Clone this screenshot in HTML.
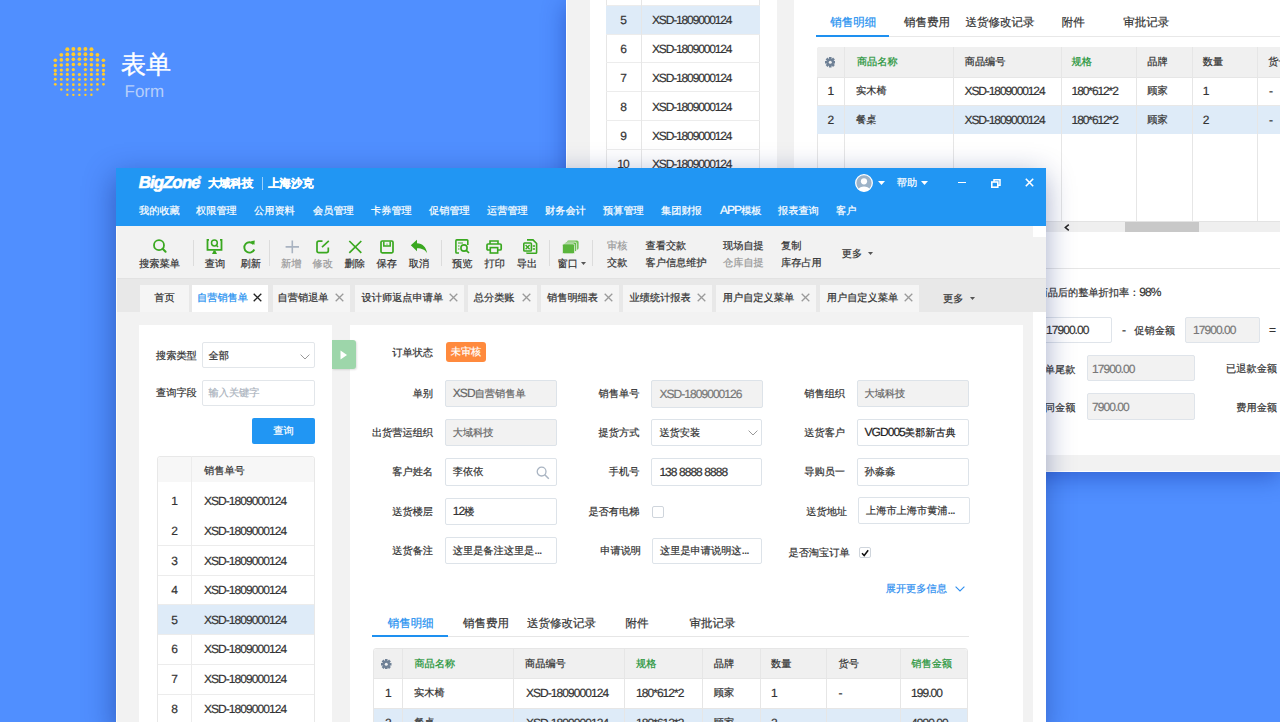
<!DOCTYPE html><html><head><meta charset="utf-8"><style>
*{margin:0;padding:0;box-sizing:border-box}
html,body{width:1280px;height:722px;overflow:hidden}
body{text-rendering:geometricPrecision;background:#508fff;font-family:"Liberation Sans", sans-serif;position:relative}
.a{position:absolute}
.t{position:absolute;white-space:nowrap;-webkit-text-stroke-width:0.2px}
</style></head><body>
<svg class="a" style="left:50px;top:44px" width="60" height="56" viewBox="0 0 60 56"><circle cx="5.30" cy="16.30" r="1.82" fill="#ffcb2d"/><circle cx="5.30" cy="21.40" r="1.73" fill="#ffcb2d"/><circle cx="5.30" cy="26.50" r="1.64" fill="#ffcb2d"/><circle cx="5.30" cy="30.17" r="1.55" fill="#ffcb2d"/><circle cx="5.30" cy="35.27" r="1.46" fill="#ffcb2d"/><circle cx="5.30" cy="40.37" r="1.37" fill="#ffcb2d"/><circle cx="11.32" cy="10.80" r="1.91" fill="#ffcb2d"/><circle cx="11.32" cy="15.90" r="1.82" fill="#ffcb2d"/><circle cx="11.32" cy="21.00" r="1.73" fill="#ffcb2d"/><circle cx="11.32" cy="26.10" r="1.64" fill="#ffcb2d"/><circle cx="11.32" cy="30.29" r="1.55" fill="#ffcb2d"/><circle cx="11.32" cy="35.39" r="1.46" fill="#ffcb2d"/><circle cx="11.32" cy="40.49" r="1.37" fill="#ffcb2d"/><circle cx="11.32" cy="45.59" r="1.28" fill="#ffcb2d"/><circle cx="17.34" cy="5.36" r="2.00" fill="#ffcb2d"/><circle cx="17.34" cy="10.46" r="1.91" fill="#ffcb2d"/><circle cx="17.34" cy="15.56" r="1.82" fill="#ffcb2d"/><circle cx="17.34" cy="20.66" r="1.73" fill="#ffcb2d"/><circle cx="17.34" cy="25.76" r="1.64" fill="#ffcb2d"/><circle cx="17.34" cy="30.39" r="1.55" fill="#ffcb2d"/><circle cx="17.34" cy="35.49" r="1.46" fill="#ffcb2d"/><circle cx="17.34" cy="40.59" r="1.37" fill="#ffcb2d"/><circle cx="17.34" cy="45.69" r="1.28" fill="#ffcb2d"/><circle cx="17.34" cy="50.79" r="1.19" fill="#ffcb2d"/><circle cx="23.36" cy="5.12" r="2.00" fill="#ffcb2d"/><circle cx="23.36" cy="10.22" r="1.91" fill="#ffcb2d"/><circle cx="23.36" cy="15.32" r="1.82" fill="#ffcb2d"/><circle cx="23.36" cy="20.42" r="1.73" fill="#ffcb2d"/><circle cx="23.36" cy="25.52" r="1.64" fill="#ffcb2d"/><circle cx="23.36" cy="30.46" r="1.55" fill="#ffcb2d"/><circle cx="23.36" cy="35.56" r="1.46" fill="#ffcb2d"/><circle cx="23.36" cy="40.66" r="1.37" fill="#ffcb2d"/><circle cx="23.36" cy="45.76" r="1.28" fill="#ffcb2d"/><circle cx="23.36" cy="50.86" r="1.19" fill="#ffcb2d"/><circle cx="29.38" cy="5.00" r="2.00" fill="#ffcb2d"/><circle cx="29.38" cy="10.10" r="1.91" fill="#ffcb2d"/><circle cx="29.38" cy="15.20" r="1.82" fill="#ffcb2d"/><circle cx="29.38" cy="20.30" r="1.73" fill="#ffcb2d"/><circle cx="29.38" cy="30.50" r="1.55" fill="#ffcb2d"/><circle cx="29.38" cy="35.60" r="1.46" fill="#ffcb2d"/><circle cx="29.38" cy="40.70" r="1.37" fill="#ffcb2d"/><circle cx="29.38" cy="45.80" r="1.28" fill="#ffcb2d"/><circle cx="29.38" cy="50.90" r="1.19" fill="#ffcb2d"/><circle cx="35.40" cy="5.12" r="2.00" fill="#ffcb2d"/><circle cx="35.40" cy="10.22" r="1.91" fill="#ffcb2d"/><circle cx="35.40" cy="15.32" r="1.82" fill="#ffcb2d"/><circle cx="35.40" cy="20.42" r="1.73" fill="#ffcb2d"/><circle cx="35.40" cy="25.52" r="1.64" fill="#ffcb2d"/><circle cx="35.40" cy="30.46" r="1.55" fill="#ffcb2d"/><circle cx="35.40" cy="35.56" r="1.46" fill="#ffcb2d"/><circle cx="35.40" cy="40.66" r="1.37" fill="#ffcb2d"/><circle cx="35.40" cy="45.76" r="1.28" fill="#ffcb2d"/><circle cx="35.40" cy="50.86" r="1.19" fill="#ffcb2d"/><circle cx="41.42" cy="5.36" r="2.00" fill="#ffcb2d"/><circle cx="41.42" cy="10.46" r="1.91" fill="#ffcb2d"/><circle cx="41.42" cy="15.56" r="1.82" fill="#ffcb2d"/><circle cx="41.42" cy="20.66" r="1.73" fill="#ffcb2d"/><circle cx="41.42" cy="25.76" r="1.64" fill="#ffcb2d"/><circle cx="41.42" cy="30.39" r="1.55" fill="#ffcb2d"/><circle cx="41.42" cy="35.49" r="1.46" fill="#ffcb2d"/><circle cx="41.42" cy="40.59" r="1.37" fill="#ffcb2d"/><circle cx="41.42" cy="45.69" r="1.28" fill="#ffcb2d"/><circle cx="41.42" cy="50.79" r="1.19" fill="#ffcb2d"/><circle cx="47.44" cy="10.80" r="1.91" fill="#ffcb2d"/><circle cx="47.44" cy="15.90" r="1.82" fill="#ffcb2d"/><circle cx="47.44" cy="21.00" r="1.73" fill="#ffcb2d"/><circle cx="47.44" cy="26.10" r="1.64" fill="#ffcb2d"/><circle cx="47.44" cy="30.29" r="1.55" fill="#ffcb2d"/><circle cx="47.44" cy="35.39" r="1.46" fill="#ffcb2d"/><circle cx="47.44" cy="40.49" r="1.37" fill="#ffcb2d"/><circle cx="47.44" cy="45.59" r="1.28" fill="#ffcb2d"/><circle cx="53.46" cy="16.30" r="1.82" fill="#ffcb2d"/><circle cx="53.46" cy="21.40" r="1.73" fill="#ffcb2d"/><circle cx="53.46" cy="26.50" r="1.64" fill="#ffcb2d"/><circle cx="53.46" cy="30.17" r="1.55" fill="#ffcb2d"/><circle cx="53.46" cy="35.27" r="1.46" fill="#ffcb2d"/><circle cx="53.46" cy="40.37" r="1.37" fill="#ffcb2d"/></svg>
<div class="t" style="left:121px;top:49.7px;font-size:25px;line-height:30px;color:#fff;letter-spacing:0px;-webkit-text-stroke-width:0.4px;">表单</div>
<div class="t" style="left:124.5px;top:81.5px;font-size:17px;line-height:20px;color:#b6cefa;letter-spacing:0px;-webkit-text-stroke-width:0;">Form</div>
<div class="a" style="left:566px;top:0px;width:714px;height:472px;background:#f2f2f2;border-left:1px solid #fff;border-bottom:1px solid #fff;box-shadow:0 5px 22px rgba(10,40,150,.45)"></div>
<div class="a" style="left:589.5px;top:0px;width:187.5px;height:471px;background:#fff;"></div>
<div class="a" style="left:794px;top:0px;width:486px;height:454.5px;background:#fff;"></div>
<div class="a" style="left:606px;top:0px;width:154px;height:180px;background:#fff;border-left:1px solid #e6e6e6;border-right:1px solid #e6e6e6"></div>
<div class="a" style="left:606px;top:5.2px;width:154px;height:28.900000000000002px;background:#deebf8;"></div>
<div class="a" style="left:606px;top:4.7px;width:154px;height:1.0px;background:#ececec;"></div>
<div class="a" style="left:606px;top:33.550000000000004px;width:154px;height:1.0px;background:#ececec;"></div>
<div class="a" style="left:606px;top:62.400000000000006px;width:154px;height:1.0px;background:#ececec;"></div>
<div class="a" style="left:606px;top:91.25000000000001px;width:154px;height:1.0px;background:#ececec;"></div>
<div class="a" style="left:606px;top:120.10000000000001px;width:154px;height:1.0px;background:#ececec;"></div>
<div class="a" style="left:606px;top:148.95px;width:154px;height:1.0px;background:#ececec;"></div>
<div class="a" style="left:641px;top:0px;width:1px;height:180px;background:#e6e6e6;"></div>
<div class="t" style="left:608.0px;width:30px;text-align:center;top:10.2px;font-size:12px;line-height:20px;color:#333;letter-spacing:-0.95px;">5</div>
<div class="t" style="left:652px;top:10.2px;font-size:12px;line-height:20px;color:#333;letter-spacing:-1.15px;">XSD-1809000124</div>
<div class="t" style="left:608.0px;width:30px;text-align:center;top:39.050000000000004px;font-size:12px;line-height:20px;color:#333;letter-spacing:-0.95px;">6</div>
<div class="t" style="left:652px;top:39.050000000000004px;font-size:12px;line-height:20px;color:#333;letter-spacing:-1.15px;">XSD-1809000124</div>
<div class="t" style="left:608.0px;width:30px;text-align:center;top:67.9px;font-size:12px;line-height:20px;color:#333;letter-spacing:-0.95px;">7</div>
<div class="t" style="left:652px;top:67.9px;font-size:12px;line-height:20px;color:#333;letter-spacing:-1.15px;">XSD-1809000124</div>
<div class="t" style="left:608.0px;width:30px;text-align:center;top:96.75000000000001px;font-size:12px;line-height:20px;color:#333;letter-spacing:-0.95px;">8</div>
<div class="t" style="left:652px;top:96.75000000000001px;font-size:12px;line-height:20px;color:#333;letter-spacing:-1.15px;">XSD-1809000124</div>
<div class="t" style="left:608.0px;width:30px;text-align:center;top:125.60000000000002px;font-size:12px;line-height:20px;color:#333;letter-spacing:-0.95px;">9</div>
<div class="t" style="left:652px;top:125.60000000000002px;font-size:12px;line-height:20px;color:#333;letter-spacing:-1.15px;">XSD-1809000124</div>
<div class="t" style="left:608.0px;width:30px;text-align:center;top:154.45000000000002px;font-size:12px;line-height:20px;color:#333;letter-spacing:-0.95px;">10</div>
<div class="t" style="left:652px;top:154.45000000000002px;font-size:12px;line-height:20px;color:#333;letter-spacing:-1.15px;">XSD-1809000124</div>
<div class="t" style="left:830.3px;top:12.8px;font-size:11.5px;line-height:20px;color:#1e90f0;letter-spacing:0px;">销售明细</div>
<div class="t" style="left:904px;top:12.8px;font-size:11.5px;line-height:20px;color:#333;letter-spacing:0px;">销售费用</div>
<div class="t" style="left:965.5px;top:12.8px;font-size:11.5px;line-height:20px;color:#333;letter-spacing:0px;">送货修改记录</div>
<div class="t" style="left:1061.8px;top:12.8px;font-size:11.5px;line-height:20px;color:#333;letter-spacing:0px;">附件</div>
<div class="t" style="left:1123.3px;top:12.8px;font-size:11.5px;line-height:20px;color:#333;letter-spacing:0px;">审批记录</div>
<div class="a" style="left:815.6px;top:36px;width:464.4px;height:1px;background:#e8e8e8;"></div>
<div class="a" style="left:815.6px;top:34.5px;width:73.39999999999998px;height:2.0px;background:#1e90f0;"></div>
<div class="a" style="left:816.6px;top:47px;width:463.4px;height:185.2px;background:#fff;border-left:1px solid #e6e6e6;border-top:1px solid #e6e6e6;border-radius:3px 0 0 0"></div>
<div class="a" style="left:817px;top:47px;width:463px;height:29.599999999999994px;background:#f0f0f0;border-radius:3px 0 0 0"></div>
<div class="a" style="left:817px;top:76.6px;width:463px;height:1.0px;background:#e6e6e6;"></div>
<div class="a" style="left:817px;top:105.3px;width:463px;height:28.89999999999999px;background:#deebf8;"></div>
<div class="a" style="left:817px;top:104.8px;width:463px;height:1.0px;background:#e8e8e8;"></div>
<div class="a" style="left:844.3px;top:47px;width:1.0px;height:174px;background:#e6e6e6;"></div>
<div class="a" style="left:952.5px;top:47px;width:1.0px;height:174px;background:#e6e6e6;"></div>
<div class="a" style="left:1060.5px;top:47px;width:1.0px;height:174px;background:#e6e6e6;"></div>
<div class="a" style="left:1135.5px;top:47px;width:1.0px;height:174px;background:#e6e6e6;"></div>
<div class="a" style="left:1191.7px;top:47px;width:1.0px;height:174px;background:#e6e6e6;"></div>
<div class="a" style="left:1256.7px;top:47px;width:1.0px;height:174px;background:#e6e6e6;"></div>
<div class="a" style="left:817px;top:221px;width:463px;height:11.199999999999989px;background:#efefef;border-top:1px solid #e3e3e3"></div>
<div class="a" style="left:1125.2px;top:221.5px;width:74.20000000000005px;height:10.699999999999989px;background:#c8c8c8;"></div>
<svg class="a" style="left:1063.5px;top:223.5px" width="6" height="7" viewBox="0 0 6 7"><path d="M4.8 0.6L1.3 3.5L4.8 6.4" fill="none" stroke="#222" stroke-width="1.5"/></svg>
<svg class="a" style="left:824.8px;top:57px" width="10.5" height="10.5" viewBox="0 0 10.5 10.5"><g transform="translate(5.25,5.25)" fill="#6f8196"><rect x="-1.3" y="-5.25" width="2.6" height="3" transform="rotate(0)"/><rect x="-1.3" y="-5.25" width="2.6" height="3" transform="rotate(45)"/><rect x="-1.3" y="-5.25" width="2.6" height="3" transform="rotate(90)"/><rect x="-1.3" y="-5.25" width="2.6" height="3" transform="rotate(135)"/><rect x="-1.3" y="-5.25" width="2.6" height="3" transform="rotate(180)"/><rect x="-1.3" y="-5.25" width="2.6" height="3" transform="rotate(225)"/><rect x="-1.3" y="-5.25" width="2.6" height="3" transform="rotate(270)"/><rect x="-1.3" y="-5.25" width="2.6" height="3" transform="rotate(315)"/><circle r="3.6"/><circle r="1.5" fill="#f0f0f0"/></g></svg>
<div class="t" style="left:856.9px;top:53.2px;font-size:10.2px;line-height:20px;color:#1f9438;letter-spacing:0px;">商品名称</div>
<div class="t" style="left:964.7px;top:53.2px;font-size:10.2px;line-height:20px;color:#333;letter-spacing:0px;">商品编号</div>
<div class="t" style="left:1071.6px;top:53.2px;font-size:10.2px;line-height:20px;color:#1f9438;letter-spacing:0px;">规格</div>
<div class="t" style="left:1147.3px;top:53.2px;font-size:10.2px;line-height:20px;color:#333;letter-spacing:0px;">品牌</div>
<div class="t" style="left:1202.8px;top:53.2px;font-size:10.2px;line-height:20px;color:#333;letter-spacing:0px;">数量</div>
<div class="t" style="left:1268.2px;top:53.2px;font-size:10.2px;line-height:20px;color:#333;letter-spacing:0px;">货号</div>
<div class="t" style="left:820.3px;width:20px;text-align:center;top:80.9px;font-size:12px;line-height:20px;color:#333;letter-spacing:-0.95px;">1</div>
<div class="t" style="left:856px;top:82.2px;font-size:10.2px;line-height:20px;color:#333;letter-spacing:0px;">实木椅</div>
<div class="t" style="left:964.5px;top:80.9px;font-size:12px;line-height:20px;color:#333;letter-spacing:-1.1px;">XSD-1809000124</div>
<div class="t" style="left:1071.6px;top:80.9px;font-size:12px;line-height:20px;color:#333;letter-spacing:-1.1px;">180*612*2</div>
<div class="t" style="left:1147.3px;top:82.2px;font-size:10.2px;line-height:20px;color:#333;letter-spacing:0px;">顾家</div>
<div class="t" style="left:1202.8px;top:80.9px;font-size:12px;line-height:20px;color:#333;letter-spacing:-1.1px;">1</div>
<div class="t" style="left:1269px;top:80.9px;font-size:12px;line-height:20px;color:#333;letter-spacing:-1.1px;">-</div>
<div class="t" style="left:820.3px;width:20px;text-align:center;top:109.5px;font-size:12px;line-height:20px;color:#333;letter-spacing:-0.95px;">2</div>
<div class="t" style="left:856px;top:110.8px;font-size:10.2px;line-height:20px;color:#333;letter-spacing:0px;">餐桌</div>
<div class="t" style="left:964.5px;top:109.5px;font-size:12px;line-height:20px;color:#333;letter-spacing:-1.1px;">XSD-1809000124</div>
<div class="t" style="left:1071.6px;top:109.5px;font-size:12px;line-height:20px;color:#333;letter-spacing:-1.1px;">180*612*2</div>
<div class="t" style="left:1147.3px;top:110.8px;font-size:10.2px;line-height:20px;color:#333;letter-spacing:0px;">顾家</div>
<div class="t" style="left:1202.8px;top:109.5px;font-size:12px;line-height:20px;color:#333;letter-spacing:-1.1px;">2</div>
<div class="t" style="left:1269px;top:109.5px;font-size:12px;line-height:20px;color:#333;letter-spacing:-1.1px;">-</div>
<div class="a" style="left:794px;top:268px;width:486px;height:1px;background:#e6e6e6;"></div>
<div class="t" style="right:119.5px;text-align:right;top:284.2px;font-size:10.2px;line-height:20px;color:#333;letter-spacing:0px;margin-right:0px;">扣除赠商品后的整单折扣率：<span style="font-size:12px;letter-spacing:-0.95px;line-height:0">98%</span></div>
<div class="a" style="left:1000px;top:317.2px;width:112.20000000000005px;height:25.69999999999999px;background:#fff;border:1px solid #dfe4ea;border-radius:2px"></div>
<div class="t" style="left:1046px;top:320.2px;font-size:12px;line-height:20px;color:#333;letter-spacing:-0.95px;">17900.00</div>
<div class="t" style="left:1122px;top:320.2px;font-size:12px;line-height:20px;color:#333;letter-spacing:-0.95px;">-</div>
<div class="t" style="left:1134.3px;top:322.2px;font-size:10.2px;line-height:20px;color:#333;letter-spacing:0px;">促销金额</div>
<div class="a" style="left:1185.3px;top:317.2px;width:74.70000000000005px;height:25.69999999999999px;background:#f2f2f2;border:1px solid #dfe4ea;border-radius:2px"></div>
<div class="t" style="left:1193px;top:320.2px;font-size:12px;line-height:20px;color:#777;letter-spacing:-0.95px;">17900.00</div>
<div class="t" style="left:1269px;top:320.2px;font-size:12px;line-height:20px;color:#333;letter-spacing:-0.95px;">=</div>
<div class="t" style="right:204.5999999999999px;text-align:right;top:360.59999999999997px;font-size:10.2px;line-height:20px;color:#333;letter-spacing:0px;margin-right:0px;">订单尾款</div>
<div class="a" style="left:1086.5px;top:354.9px;width:108.5px;height:26.5px;background:#f2f2f2;border:1px solid #dfe4ea;border-radius:2px"></div>
<div class="t" style="left:1092px;top:358.79999999999995px;font-size:12px;line-height:20px;color:#777;letter-spacing:-0.95px;">17900.00</div>
<div class="t" style="right:3px;text-align:right;top:360.4px;font-size:10.2px;line-height:20px;color:#333;letter-spacing:0px;margin-right:0px;">已退款金额</div>
<div class="t" style="right:204.5999999999999px;text-align:right;top:398.7px;font-size:10.2px;line-height:20px;color:#333;letter-spacing:0px;margin-right:0px;">合同金额</div>
<div class="a" style="left:1086.5px;top:393.4px;width:108.5px;height:26.600000000000023px;background:#f2f2f2;border:1px solid #dfe4ea;border-radius:2px"></div>
<div class="t" style="left:1092px;top:397.2px;font-size:12px;line-height:20px;color:#777;letter-spacing:-0.95px;">7900.00</div>
<div class="t" style="right:3px;text-align:right;top:398.7px;font-size:10.2px;line-height:20px;color:#333;letter-spacing:0px;margin-right:0px;">费用金额</div>
<div class="a" style="left:116px;top:168px;width:930px;height:560px;background:#fffdf6;box-shadow:-2px 8px 28px rgba(10,30,110,.42)"></div>
<div class="a" style="left:116px;top:168px;width:930px;height:58px;background:#2196f3;"></div>
<div class="t" style="left:138.8px;top:173.1px;font-size:17px;line-height:20px;color:#fff;letter-spacing:-1.05px;font-weight:bold;font-style:italic;-webkit-text-stroke-width:0.6px;">BigZone</div>
<div class="t" style="left:198px;top:174.5px;font-size:4.5px;line-height:6px;color:#fff;letter-spacing:0px;">®</div>
<div class="t" style="left:208px;top:174.2px;font-size:11.3px;line-height:20px;color:#fff;letter-spacing:0px;font-weight:bold;-webkit-text-stroke-width:0.35px;">大域科技</div>
<div class="a" style="left:261.5px;top:177px;width:1.0px;height:12.5px;background:rgba(255,255,255,.55);"></div>
<div class="t" style="left:268.3px;top:174.2px;font-size:11.3px;line-height:20px;color:#fff;letter-spacing:0px;font-weight:bold;-webkit-text-stroke-width:0.35px;">上海沙克</div>
<svg class="a" style="left:855px;top:173.5px" width="18" height="18" viewBox="0 0 18 18"><circle cx="9" cy="9" r="8.3" fill="#9db3c8" stroke="#fff" stroke-width="1.3"/><circle cx="9" cy="7.3" r="3.1" fill="#fff"/><path d="M3.5 15.2 C4.5 11.5 13.5 11.5 14.5 15.2 L14 16 C11 17.6 7 17.6 4 16Z" fill="#fff"/></svg>
<svg class="a" style="left:877.5px;top:180.5px" width="7" height="4" viewBox="0 0 7 4"><path d="M0 0H7L3.5 4Z" fill="#fff"/></svg>
<div class="t" style="left:896.7px;top:174.2px;font-size:10.2px;line-height:20px;color:#fff;letter-spacing:0px;">帮助</div>
<svg class="a" style="left:920.5px;top:180.5px" width="7" height="4" viewBox="0 0 7 4"><path d="M0 0H7L3.5 4Z" fill="#fff"/></svg>
<div class="a" style="left:958.2px;top:181.8px;width:8.099999999999909px;height:1.3999999999999773px;background:#fff;"></div>
<svg class="a" style="left:991px;top:178.5px" width="10" height="9" viewBox="0 0 10 9"><path d="M3 2.8V0.8H9V6.2H7" fill="none" stroke="#fff" stroke-width="1.5"/><rect x="0.8" y="3" width="6" height="5.2" fill="none" stroke="#fff" stroke-width="1.6"/></svg>
<svg class="a" style="left:1024.5px;top:178.3px" width="9" height="9" viewBox="0 0 9 9"><path d="M0.8 0.8L8.2 8.2M8.2 0.8L0.8 8.2" stroke="#fff" stroke-width="1.6"/></svg>
<div class="t" style="left:139px;top:201.5px;font-size:10.2px;line-height:20px;color:#fff;letter-spacing:0px;">我的收藏</div>
<div class="t" style="left:196px;top:201.5px;font-size:10.2px;line-height:20px;color:#fff;letter-spacing:0px;">权限管理</div>
<div class="t" style="left:254px;top:201.5px;font-size:10.2px;line-height:20px;color:#fff;letter-spacing:0px;">公用资料</div>
<div class="t" style="left:313px;top:201.5px;font-size:10.2px;line-height:20px;color:#fff;letter-spacing:0px;">会员管理</div>
<div class="t" style="left:371px;top:201.5px;font-size:10.2px;line-height:20px;color:#fff;letter-spacing:0px;">卡券管理</div>
<div class="t" style="left:429px;top:201.5px;font-size:10.2px;line-height:20px;color:#fff;letter-spacing:0px;">促销管理</div>
<div class="t" style="left:487px;top:201.5px;font-size:10.2px;line-height:20px;color:#fff;letter-spacing:0px;">运营管理</div>
<div class="t" style="left:545px;top:201.5px;font-size:10.2px;line-height:20px;color:#fff;letter-spacing:0px;">财务会计</div>
<div class="t" style="left:603px;top:201.5px;font-size:10.2px;line-height:20px;color:#fff;letter-spacing:0px;">预算管理</div>
<div class="t" style="left:661px;top:201.5px;font-size:10.2px;line-height:20px;color:#fff;letter-spacing:0px;">集团财报</div>
<div class="t" style="left:720px;top:201.5px;font-size:10.2px;line-height:20px;color:#fff;letter-spacing:0px;"><span style="font-size:12px;letter-spacing:-0.95px;line-height:0">APP</span>模板</div>
<div class="t" style="left:778px;top:201.5px;font-size:10.2px;line-height:20px;color:#fff;letter-spacing:0px;">报表查询</div>
<div class="t" style="left:836px;top:201.5px;font-size:10.2px;line-height:20px;color:#fff;letter-spacing:0px;">客户</div>
<div class="a" style="left:117px;top:226px;width:929px;height:52px;background:#f2f2f2;"></div>
<div class="a" style="left:1033px;top:226px;width:13px;height:10.599999999999994px;background:#fff;"></div>
<div class="a" style="left:117px;top:277.5px;width:929px;height:1.0px;background:#e2e2e2;"></div>
<div class="t" style="left:129.5px;width:60px;text-align:center;top:254.7px;font-size:10.2px;line-height:20px;color:#333;letter-spacing:0px;">搜索菜单</div>
<div class="t" style="left:185.0px;width:60px;text-align:center;top:254.7px;font-size:10.2px;line-height:20px;color:#333;letter-spacing:0px;">查询</div>
<div class="t" style="left:220.8px;width:60px;text-align:center;top:254.7px;font-size:10.2px;line-height:20px;color:#333;letter-spacing:0px;">刷新</div>
<div class="t" style="left:261.3px;width:60px;text-align:center;top:254.7px;font-size:10.2px;line-height:20px;color:#9a9a9a;letter-spacing:0px;">新增</div>
<div class="t" style="left:292.8px;width:60px;text-align:center;top:254.7px;font-size:10.2px;line-height:20px;color:#9a9a9a;letter-spacing:0px;">修改</div>
<div class="t" style="left:324.8px;width:60px;text-align:center;top:254.7px;font-size:10.2px;line-height:20px;color:#333;letter-spacing:0px;">删除</div>
<div class="t" style="left:356.8px;width:60px;text-align:center;top:254.7px;font-size:10.2px;line-height:20px;color:#333;letter-spacing:0px;">保存</div>
<div class="t" style="left:389.0px;width:60px;text-align:center;top:254.7px;font-size:10.2px;line-height:20px;color:#333;letter-spacing:0px;">取消</div>
<div class="t" style="left:432.3px;width:60px;text-align:center;top:254.7px;font-size:10.2px;line-height:20px;color:#333;letter-spacing:0px;">预览</div>
<div class="t" style="left:464.8px;width:60px;text-align:center;top:254.7px;font-size:10.2px;line-height:20px;color:#333;letter-spacing:0px;">打印</div>
<div class="t" style="left:497.0px;width:60px;text-align:center;top:254.7px;font-size:10.2px;line-height:20px;color:#333;letter-spacing:0px;">导出</div>
<div class="t" style="left:537.8px;width:60px;text-align:center;top:254.7px;font-size:10.2px;line-height:20px;color:#333;letter-spacing:0px;">窗口</div>
<div class="a" style="left:193px;top:240px;width:1px;height:26px;background:#dcdcdc;"></div>
<div class="a" style="left:269px;top:240px;width:1px;height:26px;background:#dcdcdc;"></div>
<div class="a" style="left:441px;top:240px;width:1px;height:26px;background:#dcdcdc;"></div>
<div class="a" style="left:548.5px;top:240px;width:1.0px;height:26px;background:#dcdcdc;"></div>
<div class="a" style="left:592px;top:240px;width:1px;height:26px;background:#dcdcdc;"></div>
<svg class="a" style="left:580.5px;top:261.5px" width="5" height="3" viewBox="0 0 5 3"><path d="M0 0H5L2.5 3Z" fill="#555"/></svg>
<svg class="a" style="left:152px;top:238px" width="16" height="16" viewBox="0 0 16 16"><circle cx="7" cy="7.2" r="5" fill="none" stroke="#3aa820" stroke-width="1.8"/><path d="M10.6 10.8L13.6 13.8" stroke="#3aa820" stroke-width="2" stroke-linecap="round"/></svg>
<svg class="a" style="left:206px;top:238px" width="18" height="17" viewBox="0 0 18 17"><path d="M3 1.8H1.5V11.8H15.5V1.8H14" fill="none" stroke="#3aa820" stroke-width="1.8"/><circle cx="8.4" cy="5" r="2.9" fill="none" stroke="#3aa820" stroke-width="1.5"/><path d="M10.4 7.2L12 9" stroke="#3aa820" stroke-width="1.5"/><path d="M6 16H11L9.3 12.6H7.7Z" fill="#3aa820"/></svg>
<svg class="a" style="left:242px;top:238.5px" width="15" height="16" viewBox="0 0 15 16"><path d="M11.6 5.2A5.2 5.2 0 1 0 12.3 10.5" fill="none" stroke="#3aa820" stroke-width="1.9"/><path d="M8.8 2.2L12.8 1.5L12.3 6Z" fill="#3aa820"/></svg>
<svg class="a" style="left:284.5px;top:239.5px" width="15" height="14" viewBox="0 0 15 14"><path d="M7.3 0.6V13.2M0.6 6.9H14" stroke="#a9b3c1" stroke-width="1.6"/></svg>
<svg class="a" style="left:315.5px;top:239.5px" width="15" height="14" viewBox="0 0 15 14"><path d="M6.5 1.2H2.8Q1 1.2 1 3V11Q1 12.6 2.8 12.6H10.5Q12.3 12.6 12.3 11V7.5" fill="none" stroke="#3aa820" stroke-width="1.7"/><path d="M6 7.2L12.8 0.8" stroke="#3aa820" stroke-width="1.6"/></svg>
<svg class="a" style="left:347.5px;top:239.5px" width="15" height="14" viewBox="0 0 15 14"><path d="M1.3 1L13.3 12.8M13.3 1L1.3 12.8" stroke="#3aa820" stroke-width="1.7"/></svg>
<svg class="a" style="left:379.5px;top:239.5px" width="15" height="14" viewBox="0 0 15 14"><rect x="1" y="1" width="12" height="11.8" rx="1.2" fill="none" stroke="#3aa820" stroke-width="1.7"/><path d="M3.8 1.5V6H10.2V1.5" fill="none" stroke="#3aa820" stroke-width="1.5"/><path d="M6.2 4.6L7 3.2L7.8 4.6Z" fill="#3aa820"/></svg>
<svg class="a" style="left:409.5px;top:239px" width="18" height="15" viewBox="0 0 18 15"><path d="M0.8 6.2L7 0.8V4.2C12.5 4.2 16 8 17.2 14.2C15 10.6 12 9.2 7 9.2V12.2Z" fill="#3aa820"/></svg>
<svg class="a" style="left:455px;top:238.5px" width="16" height="16" viewBox="0 0 16 16"><path d="M12.8 6V1.6Q12.8 0.9 12 0.9H1.7Q0.9 0.9 0.9 1.7V13.3Q0.9 14 1.7 14H4" fill="none" stroke="#3aa820" stroke-width="1.6"/><circle cx="9" cy="9" r="3.1" fill="none" stroke="#3aa820" stroke-width="1.6"/><path d="M11.3 11.3L14 14" stroke="#3aa820" stroke-width="1.7"/><path d="M3 4H8M3 7H4.5M3 10H4.5" stroke="#3aa820" stroke-width="1.2"/></svg>
<svg class="a" style="left:486px;top:239.5px" width="17" height="14" viewBox="0 0 17 14"><path d="M4 4V1H12V4" fill="none" stroke="#3aa820" stroke-width="1.6"/><path d="M4 10H2Q1 10 1 9V5Q1 4 2 4H14Q15.2 4 15.2 5V9Q15.2 10 14 10H12" fill="none" stroke="#3aa820" stroke-width="1.7"/><rect x="4.3" y="7.6" width="7.4" height="5.4" fill="none" stroke="#3aa820" stroke-width="1.6"/></svg>
<svg class="a" style="left:522.5px;top:238.5px" width="15" height="16" viewBox="0 0 15 16"><path d="M4 0.9H10L13.6 4.5V13.4Q13.6 14.2 12.8 14.2H4.6Q3.8 14.2 3.8 13.4" fill="none" stroke="#3aa820" stroke-width="1.6"/><rect x="0.8" y="4" width="7.6" height="8" rx="0.8" fill="none" stroke="#3aa820" stroke-width="1.6"/><path d="M2.6 6L6.6 10.2M6.6 6L2.6 10.2" stroke="#3aa820" stroke-width="1.3"/><path d="M9.8 7H12M9.8 10H12" stroke="#3aa820" stroke-width="1.3"/></svg>
<svg class="a" style="left:561.5px;top:239.5px" width="17" height="14" viewBox="0 0 17 14"><rect x="4.8" y="0.5" width="11.8" height="9.2" rx="1.6" fill="#6fc152"/><rect x="2.6" y="2.1" width="12" height="9.6" rx="1.6" fill="#63bb47" stroke="#f2f2f2" stroke-width="0.8"/><rect x="0.4" y="3.8" width="12.2" height="10" rx="1.6" fill="#5ab53c" stroke="#f2f2f2" stroke-width="0.8"/></svg>
<div class="t" style="left:607px;top:237.2px;font-size:10.2px;line-height:20px;color:#9a9a9a;letter-spacing:0px;">审核</div>
<div class="t" style="left:607px;top:254.2px;font-size:10.2px;line-height:20px;color:#333;letter-spacing:0px;">交款</div>
<div class="t" style="left:645.5px;top:237.2px;font-size:10.2px;line-height:20px;color:#333;letter-spacing:0px;">查看交款</div>
<div class="t" style="left:645.5px;top:254.2px;font-size:10.2px;line-height:20px;color:#333;letter-spacing:0px;">客户信息维护</div>
<div class="t" style="left:723px;top:237.2px;font-size:10.2px;line-height:20px;color:#333;letter-spacing:0px;">现场自提</div>
<div class="t" style="left:723px;top:254.2px;font-size:10.2px;line-height:20px;color:#9a9a9a;letter-spacing:0px;">仓库自提</div>
<div class="t" style="left:781px;top:237.2px;font-size:10.2px;line-height:20px;color:#333;letter-spacing:0px;">复制</div>
<div class="t" style="left:781px;top:254.2px;font-size:10.2px;line-height:20px;color:#333;letter-spacing:0px;">库存占用</div>
<div class="t" style="left:841.8px;top:244.7px;font-size:10.2px;line-height:20px;color:#333;letter-spacing:0px;">更多</div>
<svg class="a" style="left:867.5px;top:252px" width="5" height="3" viewBox="0 0 5 3"><path d="M0 0H5L2.5 3Z" fill="#555"/></svg>
<div class="a" style="left:117px;top:278.5px;width:929px;height:33.5px;background:#e8e8e8;"></div>
<div class="a" style="left:140px;top:285px;width:48.80000000000001px;height:27px;background:#f5f5f5;"></div>
<div class="t" style="left:140.0px;width:48.80000000000001px;text-align:center;top:289.0px;font-size:10.2px;line-height:20px;color:#333;letter-spacing:0px;">首页</div>
<div class="a" style="left:192px;top:285px;width:76px;height:27px;background:#fff;"></div>
<div class="t" style="left:197px;top:289.0px;font-size:10.2px;line-height:20px;color:#1e90f0;letter-spacing:0px;">自营销售单</div>
<svg class="a" style="left:253.2px;top:293.3px" width="9" height="9" viewBox="0 0 9 9"><path d="M0.7 0.7L8.3 8.3M8.3 0.7L0.7 8.3" stroke="#222" stroke-width="1.3"/></svg>
<div class="a" style="left:272.6px;top:285px;width:77.39999999999998px;height:27px;background:#f5f5f5;"></div>
<div class="t" style="left:277.6px;top:289.0px;font-size:10.2px;line-height:20px;color:#333;letter-spacing:0px;">自营销退单</div>
<svg class="a" style="left:335.2px;top:293.3px" width="9" height="9" viewBox="0 0 9 9"><path d="M0.7 0.7L8.3 8.3M8.3 0.7L0.7 8.3" stroke="#9a9a9a" stroke-width="1.3"/></svg>
<div class="a" style="left:354.7px;top:285px;width:109.10000000000002px;height:27px;background:#f5f5f5;"></div>
<div class="t" style="left:361.6px;top:289.0px;font-size:10.2px;line-height:20px;color:#333;letter-spacing:0px;">设计师返点申请单</div>
<svg class="a" style="left:449.0px;top:293.3px" width="9" height="9" viewBox="0 0 9 9"><path d="M0.7 0.7L8.3 8.3M8.3 0.7L0.7 8.3" stroke="#9a9a9a" stroke-width="1.3"/></svg>
<div class="a" style="left:467.8px;top:285px;width:68.80000000000001px;height:27px;background:#f5f5f5;"></div>
<div class="t" style="left:473.8px;top:289.0px;font-size:10.2px;line-height:20px;color:#333;letter-spacing:0px;">总分类账</div>
<svg class="a" style="left:521.8000000000001px;top:293.3px" width="9" height="9" viewBox="0 0 9 9"><path d="M0.7 0.7L8.3 8.3M8.3 0.7L0.7 8.3" stroke="#9a9a9a" stroke-width="1.3"/></svg>
<div class="a" style="left:541px;top:285px;width:78px;height:27px;background:#f5f5f5;"></div>
<div class="t" style="left:547px;top:289.0px;font-size:10.2px;line-height:20px;color:#333;letter-spacing:0px;">销售明细表</div>
<svg class="a" style="left:604.2px;top:293.3px" width="9" height="9" viewBox="0 0 9 9"><path d="M0.7 0.7L8.3 8.3M8.3 0.7L0.7 8.3" stroke="#9a9a9a" stroke-width="1.3"/></svg>
<div class="a" style="left:623.4px;top:285px;width:88.60000000000002px;height:27px;background:#f5f5f5;"></div>
<div class="t" style="left:629.6px;top:289.0px;font-size:10.2px;line-height:20px;color:#333;letter-spacing:0px;">业绩统计报表</div>
<svg class="a" style="left:697.2px;top:293.3px" width="9" height="9" viewBox="0 0 9 9"><path d="M0.7 0.7L8.3 8.3M8.3 0.7L0.7 8.3" stroke="#9a9a9a" stroke-width="1.3"/></svg>
<div class="a" style="left:716px;top:285px;width:100px;height:27px;background:#f5f5f5;"></div>
<div class="t" style="left:722.8px;top:289.0px;font-size:10.2px;line-height:20px;color:#333;letter-spacing:0px;">用户自定义菜单</div>
<svg class="a" style="left:801.2px;top:293.3px" width="9" height="9" viewBox="0 0 9 9"><path d="M0.7 0.7L8.3 8.3M8.3 0.7L0.7 8.3" stroke="#9a9a9a" stroke-width="1.3"/></svg>
<div class="a" style="left:820px;top:285px;width:99px;height:27px;background:#f5f5f5;"></div>
<div class="t" style="left:826.8px;top:289.0px;font-size:10.2px;line-height:20px;color:#333;letter-spacing:0px;">用户自定义菜单</div>
<svg class="a" style="left:904.2px;top:293.3px" width="9" height="9" viewBox="0 0 9 9"><path d="M0.7 0.7L8.3 8.3M8.3 0.7L0.7 8.3" stroke="#9a9a9a" stroke-width="1.3"/></svg>
<div class="t" style="left:943px;top:289.8px;font-size:10.2px;line-height:20px;color:#333;letter-spacing:0px;">更多</div>
<svg class="a" style="left:969.5px;top:297px" width="5" height="3" viewBox="0 0 5 3"><path d="M0 0H5L2.5 3Z" fill="#555"/></svg>
<div class="a" style="left:117px;top:312px;width:929px;height:410px;background:#f2f2f2;"></div>
<div class="a" style="left:1033px;top:312px;width:13px;height:410px;background:#fff;"></div>
<div class="a" style="left:139px;top:325px;width:193px;height:397px;background:#fff;"></div>
<div class="t" style="left:156px;top:347.2px;font-size:10.2px;line-height:20px;color:#333;letter-spacing:0px;">搜索类型</div>
<div class="a" style="left:202.3px;top:342.3px;width:112.30000000000001px;height:26.19999999999999px;background:#fff;border:1px solid #e2e6ea;border-radius:2px"></div>
<div class="t" style="left:208.5px;top:347.0px;font-size:10.2px;line-height:20px;color:#333;letter-spacing:0px;">全部</div>
<svg class="a" style="left:300px;top:353.5px" width="10" height="6" viewBox="0 0 10 6"><path d="M0.6 0.6L5 5L9.4 0.6" fill="none" stroke="#999" stroke-width="1"/></svg>
<div class="t" style="left:156px;top:384.4px;font-size:10.2px;line-height:20px;color:#333;letter-spacing:0px;">查询字段</div>
<div class="a" style="left:202.3px;top:380px;width:112.30000000000001px;height:25.69999999999999px;background:#fff;border:1px solid #e2e6ea;border-radius:2px"></div>
<div class="t" style="left:208.5px;top:384.2px;font-size:10.2px;line-height:20px;color:#aab2bd;letter-spacing:0px;">输入关键字</div>
<div class="a" style="left:252px;top:418px;width:62.80000000000001px;height:25.69999999999999px;background:#2196f3;border-radius:2px"></div>
<div class="t" style="left:253.39999999999998px;width:60px;text-align:center;top:422.2px;font-size:10.2px;line-height:20px;color:#fff;letter-spacing:0px;">查询</div>
<div class="a" style="left:156.5px;top:456px;width:158.0px;height:284px;background:#fff;border:1px solid #e8e8e8;border-radius:3px 3px 0 0"></div>
<div class="a" style="left:158px;top:457px;width:155.5px;height:25px;background:#f7f7f7;border-radius:3px 3px 0 0"></div>
<div class="a" style="left:191px;top:456px;width:1px;height:266px;background:#ececec;"></div>
<div class="t" style="left:204px;top:462.4px;font-size:10.2px;line-height:20px;color:#333;letter-spacing:0px;">销售单号</div>
<div class="a" style="left:158px;top:604.7px;width:155.5px;height:30.09999999999991px;background:#deebf8;"></div>
<div class="a" style="left:158px;top:545.1px;width:155.5px;height:1.0px;background:#ececec;"></div>
<div class="a" style="left:158px;top:574.8px;width:155.5px;height:1.0px;background:#ececec;"></div>
<div class="a" style="left:158px;top:604.2px;width:155.5px;height:1.0px;background:#ececec;"></div>
<div class="a" style="left:158px;top:634.3px;width:155.5px;height:1.0px;background:#ececec;"></div>
<div class="a" style="left:158px;top:663.8px;width:155.5px;height:1.0px;background:#ececec;"></div>
<div class="a" style="left:158px;top:693.7px;width:155.5px;height:1.0px;background:#ececec;"></div>
<div class="t" style="left:164.2px;width:20px;text-align:center;top:491.4px;font-size:12px;line-height:20px;color:#333;letter-spacing:-0.95px;">1</div>
<div class="t" style="left:204px;top:491.4px;font-size:12px;line-height:20px;color:#333;letter-spacing:-0.95px;">XSD-1809000124</div>
<div class="t" style="left:164.2px;width:20px;text-align:center;top:521.4px;font-size:12px;line-height:20px;color:#333;letter-spacing:-0.95px;">2</div>
<div class="t" style="left:204px;top:521.4px;font-size:12px;line-height:20px;color:#333;letter-spacing:-0.95px;">XSD-1809000124</div>
<div class="t" style="left:164.2px;width:20px;text-align:center;top:550.9px;font-size:12px;line-height:20px;color:#333;letter-spacing:-0.95px;">3</div>
<div class="t" style="left:204px;top:550.9px;font-size:12px;line-height:20px;color:#333;letter-spacing:-0.95px;">XSD-1809000124</div>
<div class="t" style="left:164.2px;width:20px;text-align:center;top:580.4px;font-size:12px;line-height:20px;color:#333;letter-spacing:-0.95px;">4</div>
<div class="t" style="left:204px;top:580.4px;font-size:12px;line-height:20px;color:#333;letter-spacing:-0.95px;">XSD-1809000124</div>
<div class="t" style="left:164.2px;width:20px;text-align:center;top:609.9px;font-size:12px;line-height:20px;color:#333;letter-spacing:-0.95px;">5</div>
<div class="t" style="left:204px;top:609.9px;font-size:12px;line-height:20px;color:#333;letter-spacing:-0.95px;">XSD-1809000124</div>
<div class="t" style="left:164.2px;width:20px;text-align:center;top:639.4px;font-size:12px;line-height:20px;color:#333;letter-spacing:-0.95px;">6</div>
<div class="t" style="left:204px;top:639.4px;font-size:12px;line-height:20px;color:#333;letter-spacing:-0.95px;">XSD-1809000124</div>
<div class="t" style="left:164.2px;width:20px;text-align:center;top:668.9px;font-size:12px;line-height:20px;color:#333;letter-spacing:-0.95px;">7</div>
<div class="t" style="left:204px;top:668.9px;font-size:12px;line-height:20px;color:#333;letter-spacing:-0.95px;">XSD-1809000124</div>
<div class="t" style="left:164.2px;width:20px;text-align:center;top:698.9px;font-size:12px;line-height:20px;color:#333;letter-spacing:-0.95px;">8</div>
<div class="t" style="left:204px;top:698.9px;font-size:12px;line-height:20px;color:#333;letter-spacing:-0.95px;">XSD-1809000124</div>
<div class="a" style="left:350px;top:325px;width:672.75px;height:397px;background:#fff;"></div>
<div class="a" style="left:332px;top:340px;width:23.5px;height:29px;background:#9dd6aa;border-radius:0 3px 3px 0;box-shadow:1px 1px 2px rgba(0,0,0,.12)"></div>
<svg class="a" style="left:339.5px;top:349.5px" width="8" height="10" viewBox="0 0 8 10"><path d="M0.5 0.5L7 5L0.5 9.5Z" fill="#fff"/></svg>
<div class="t" style="right:847px;text-align:right;top:343.5px;font-size:10.2px;line-height:20px;color:#333;letter-spacing:0px;margin-right:0px;">订单状态</div>
<div class="a" style="left:446px;top:341.7px;width:40px;height:20.100000000000023px;background:#ff8a3d;border-radius:3px"></div>
<div class="t" style="left:446.0px;width:40px;text-align:center;top:343.0px;font-size:10.2px;line-height:20px;color:#fff;letter-spacing:0px;">未审核</div>
<div class="t" style="right:847px;text-align:right;top:384.84999999999997px;font-size:10.2px;line-height:20px;color:#333;letter-spacing:0px;margin-right:0px;">单别</div>
<div class="a" style="left:444.5px;top:380px;width:112.0px;height:27.30000000000001px;background:#f2f2f2;border:1px solid #dde3e9;border-radius:2px"></div>
<div class="t" style="left:452.8px;top:384.84999999999997px;font-size:10.2px;line-height:20px;color:#666;letter-spacing:0px;"><span style="font-size:12px;letter-spacing:-0.95px;line-height:0">XSD</span>自营销售单</div>
<div class="t" style="right:847px;text-align:right;top:424.15px;font-size:10.2px;line-height:20px;color:#333;letter-spacing:0px;margin-right:0px;">出货营运组织</div>
<div class="a" style="left:444.5px;top:419.4px;width:112.0px;height:27.100000000000023px;background:#f2f2f2;border:1px solid #dde3e9;border-radius:2px"></div>
<div class="t" style="left:452.8px;top:424.15px;font-size:10.2px;line-height:20px;color:#666;letter-spacing:0px;">大域科技</div>
<div class="t" style="right:847px;text-align:right;top:463.25px;font-size:10.2px;line-height:20px;color:#333;letter-spacing:0px;margin-right:0px;">客户姓名</div>
<div class="a" style="left:444.5px;top:458.3px;width:112.0px;height:27.5px;background:#fff;border:1px solid #dde3e9;border-radius:2px"></div>
<div class="t" style="left:452.8px;top:463.25px;font-size:10.2px;line-height:20px;color:#333;letter-spacing:0px;">李依依</div>
<div class="t" style="right:847px;text-align:right;top:502.84999999999997px;font-size:10.2px;line-height:20px;color:#333;letter-spacing:0px;margin-right:0px;">送货楼层</div>
<div class="a" style="left:444.5px;top:498px;width:112.0px;height:27.299999999999955px;background:#fff;border:1px solid #dde3e9;border-radius:2px"></div>
<div class="t" style="left:452.8px;top:502.84999999999997px;font-size:10.2px;line-height:20px;color:#333;letter-spacing:0px;"><span style="font-size:12px;letter-spacing:-0.95px;line-height:0">12</span>楼</div>
<div class="t" style="right:847px;text-align:right;top:542.0px;font-size:10.2px;line-height:20px;color:#333;letter-spacing:0px;margin-right:0px;">送货备注</div>
<div class="a" style="left:444.5px;top:537.3px;width:112.0px;height:27.0px;background:#fff;border:1px solid #dde3e9;border-radius:2px"></div>
<div class="t" style="left:452.8px;top:542.0px;font-size:10.2px;line-height:20px;color:#333;letter-spacing:0px;">这里是备注这里是<span style="font-size:12px;letter-spacing:-0.95px;line-height:0">...</span></div>
<svg class="a" style="left:535.5px;top:465.5px" width="14" height="14" viewBox="0 0 14 14"><circle cx="5.6" cy="5.6" r="4.4" fill="none" stroke="#a9b4c2" stroke-width="1.3"/><path d="M8.8 8.8L12.8 12.8" stroke="#a9b4c2" stroke-width="1.5"/></svg>
<div class="t" style="right:640.7px;text-align:right;top:384.84999999999997px;font-size:10.2px;line-height:20px;color:#333;letter-spacing:0px;margin-right:0px;">销售单号</div>
<div class="t" style="right:640.7px;text-align:right;top:424.15px;font-size:10.2px;line-height:20px;color:#333;letter-spacing:0px;margin-right:0px;">提货方式</div>
<div class="t" style="right:640.7px;text-align:right;top:463.25px;font-size:10.2px;line-height:20px;color:#333;letter-spacing:0px;margin-right:0px;">手机号</div>
<div class="t" style="right:640.7px;text-align:right;top:502.84999999999997px;font-size:10.2px;line-height:20px;color:#333;letter-spacing:0px;margin-right:0px;">是否有电梯</div>
<div class="t" style="right:639px;text-align:right;top:542.0px;font-size:10.2px;line-height:20px;color:#333;letter-spacing:0px;margin-right:0px;">申请说明</div>
<div class="a" style="left:651.3px;top:380.3px;width:111.70000000000005px;height:27.69999999999999px;background:#f2f2f2;border:1px solid #dde3e9;border-radius:2px"></div>
<div class="t" style="left:659.4px;top:383.79999999999995px;font-size:12px;line-height:20px;color:#777;letter-spacing:-0.95px;">XSD-1809000126</div>
<div class="a" style="left:651.3px;top:419.4px;width:111.20000000000005px;height:27.100000000000023px;background:#fff;border:1px solid #dde3e9;border-radius:2px"></div>
<div class="t" style="left:659.4px;top:424.2px;font-size:10.2px;line-height:20px;color:#333;letter-spacing:0px;">送货安装</div>
<svg class="a" style="left:748px;top:430px" width="10" height="6" viewBox="0 0 10 6"><path d="M0.6 0.6L5 5L9.4 0.6" fill="none" stroke="#999" stroke-width="1"/></svg>
<div class="a" style="left:651.3px;top:458.3px;width:111.20000000000005px;height:27.5px;background:#fff;border:1px solid #dde3e9;border-radius:2px"></div>
<div class="t" style="left:659.4px;top:461.9px;font-size:12px;line-height:20px;color:#333;letter-spacing:-0.95px;">138 8888 8888</div>
<div class="a" style="left:652px;top:506px;width:11.700000000000045px;height:11.5px;background:#fff;border:1px solid #cfd5dc;border-radius:2px"></div>
<div class="a" style="left:652px;top:538px;width:110px;height:25.600000000000023px;background:#fff;border:1px solid #dde3e9;border-radius:2px"></div>
<div class="t" style="left:660px;top:542.0px;font-size:10.2px;line-height:20px;color:#333;letter-spacing:0px;">这里是申请说明这<span style="font-size:12px;letter-spacing:-0.95px;line-height:0">...</span></div>
<div class="t" style="right:435px;text-align:right;top:384.84999999999997px;font-size:10.2px;line-height:20px;color:#333;letter-spacing:0px;margin-right:0px;">销售组织</div>
<div class="t" style="right:435px;text-align:right;top:424.15px;font-size:10.2px;line-height:20px;color:#333;letter-spacing:0px;margin-right:0px;">送货客户</div>
<div class="t" style="right:435px;text-align:right;top:463.25px;font-size:10.2px;line-height:20px;color:#333;letter-spacing:0px;margin-right:0px;">导购员一</div>
<div class="t" style="right:433px;text-align:right;top:502.84999999999997px;font-size:10.2px;line-height:20px;color:#333;letter-spacing:0px;margin-right:0px;">送货地址</div>
<div class="t" style="right:430.4px;text-align:right;top:543.5px;font-size:10.2px;line-height:20px;color:#333;letter-spacing:0px;margin-right:0px;">是否淘宝订单</div>
<div class="a" style="left:857px;top:379.5px;width:112px;height:27.100000000000023px;background:#f2f2f2;border:1px solid #dde3e9;border-radius:2px"></div>
<div class="t" style="left:864.5px;top:385.2px;font-size:10.2px;line-height:20px;color:#666;letter-spacing:0px;">大域科技</div>
<div class="a" style="left:857px;top:419px;width:112px;height:27px;background:#fff;border:1px solid #dde3e9;border-radius:2px"></div>
<div class="t" style="left:864.5px;top:423.7px;font-size:10.2px;line-height:20px;color:#222;letter-spacing:0px;"><span style="font-size:12px;letter-spacing:-0.95px;line-height:0">VGD005</span>美郡新古典</div>
<div class="a" style="left:857px;top:458.3px;width:112px;height:27.5px;background:#fff;border:1px solid #dde3e9;border-radius:2px"></div>
<div class="t" style="left:864.5px;top:463.2px;font-size:10.2px;line-height:20px;color:#333;letter-spacing:0px;">孙淼淼</div>
<div class="a" style="left:858.2px;top:497.2px;width:111.79999999999995px;height:27.19999999999999px;background:#fff;border:1px solid #dde3e9;border-radius:2px"></div>
<div class="t" style="left:866px;top:502.0px;font-size:10.2px;line-height:20px;color:#333;letter-spacing:0px;">上海市上海市黄浦<span style="font-size:12px;letter-spacing:-0.95px;line-height:0">...</span></div>
<div class="a" style="left:859px;top:546.5px;width:11.75px;height:11.5px;background:#fff;border:1px solid #cfd5dc;border-radius:2px"></div>
<svg class="a" style="left:860px;top:547.5px" width="10" height="10" viewBox="0 0 10 10"><path d="M2 5.2L4.2 7.5L8.2 2.2" fill="none" stroke="#111" stroke-width="1.5"/></svg>
<div class="t" style="left:885.7px;top:579.6px;font-size:10.2px;line-height:20px;color:#2f8ff0;letter-spacing:0px;">展开更多信息</div>
<svg class="a" style="left:954.5px;top:585.5px" width="10" height="6" viewBox="0 0 10 6"><path d="M0.6 0.6L5 5L9.4 0.6" fill="none" stroke="#2f8ff0" stroke-width="1.1"/></svg>
<div class="t" style="left:387.75px;top:613.8000000000001px;font-size:11.5px;line-height:20px;color:#1e90f0;letter-spacing:0px;">销售明细</div>
<div class="t" style="left:463px;top:613.8000000000001px;font-size:11.5px;line-height:20px;color:#333;letter-spacing:0px;">销售费用</div>
<div class="t" style="left:527px;top:613.8000000000001px;font-size:11.5px;line-height:20px;color:#333;letter-spacing:0px;">送货修改记录</div>
<div class="t" style="left:625.6px;top:613.8000000000001px;font-size:11.5px;line-height:20px;color:#333;letter-spacing:0px;">附件</div>
<div class="t" style="left:689.4px;top:613.8000000000001px;font-size:11.5px;line-height:20px;color:#333;letter-spacing:0px;">审批记录</div>
<div class="a" style="left:372.2px;top:636px;width:597.2px;height:1px;background:#e6e6e6;"></div>
<div class="a" style="left:372.2px;top:634.7px;width:75.55000000000001px;height:2.0px;background:#1e90f0;"></div>
<div class="a" style="left:373px;top:648.4px;width:595.4px;height:91.60000000000002px;background:#fff;border:1px solid #e6e6e6;border-radius:3px 3px 0 0"></div>
<div class="a" style="left:374px;top:649.4px;width:593.4px;height:29.0px;background:#f0f0f0;border-radius:3px 3px 0 0"></div>
<div class="a" style="left:374px;top:678.4px;width:593.4px;height:1.0px;background:#e6e6e6;"></div>
<div class="a" style="left:374px;top:708.4px;width:593.4px;height:13.600000000000023px;background:#deebf8;"></div>
<div class="a" style="left:374px;top:708px;width:593.4px;height:1px;background:#e6e6e6;"></div>
<div class="a" style="left:402.2px;top:649px;width:1.0px;height:73px;background:#e6e6e6;"></div>
<div class="a" style="left:513.4px;top:649px;width:1.0px;height:73px;background:#e6e6e6;"></div>
<div class="a" style="left:623.75px;top:649px;width:1.0px;height:73px;background:#e6e6e6;"></div>
<div class="a" style="left:701.6px;top:649px;width:1.0px;height:73px;background:#e6e6e6;"></div>
<div class="a" style="left:759.7px;top:649px;width:1.0px;height:73px;background:#e6e6e6;"></div>
<div class="a" style="left:826.4px;top:649px;width:1.0px;height:73px;background:#e6e6e6;"></div>
<div class="a" style="left:899.6px;top:649px;width:1.0px;height:73px;background:#e6e6e6;"></div>
<svg class="a" style="left:381.4px;top:658.5px" width="10.5" height="10.5" viewBox="0 0 10.5 10.5"><g transform="translate(5.25,5.25)" fill="#6f8196"><rect x="-1.3" y="-5.25" width="2.6" height="3" transform="rotate(0)"/><rect x="-1.3" y="-5.25" width="2.6" height="3" transform="rotate(45)"/><rect x="-1.3" y="-5.25" width="2.6" height="3" transform="rotate(90)"/><rect x="-1.3" y="-5.25" width="2.6" height="3" transform="rotate(135)"/><rect x="-1.3" y="-5.25" width="2.6" height="3" transform="rotate(180)"/><rect x="-1.3" y="-5.25" width="2.6" height="3" transform="rotate(225)"/><rect x="-1.3" y="-5.25" width="2.6" height="3" transform="rotate(270)"/><rect x="-1.3" y="-5.25" width="2.6" height="3" transform="rotate(315)"/><circle r="3.6"/><circle r="1.5" fill="#f0f0f0"/></g></svg>
<div class="t" style="left:414.4px;top:655.0px;font-size:10.2px;line-height:20px;color:#1f9438;letter-spacing:0px;">商品名称</div>
<div class="t" style="left:525px;top:655.0px;font-size:10.2px;line-height:20px;color:#333;letter-spacing:0px;">商品编号</div>
<div class="t" style="left:636px;top:655.0px;font-size:10.2px;line-height:20px;color:#1f9438;letter-spacing:0px;">规格</div>
<div class="t" style="left:713.75px;top:655.0px;font-size:10.2px;line-height:20px;color:#333;letter-spacing:0px;">品牌</div>
<div class="t" style="left:771px;top:655.0px;font-size:10.2px;line-height:20px;color:#333;letter-spacing:0px;">数量</div>
<div class="t" style="left:838.5px;top:655.0px;font-size:10.2px;line-height:20px;color:#333;letter-spacing:0px;">货号</div>
<div class="t" style="left:911.25px;top:655.0px;font-size:10.2px;line-height:20px;color:#1f9438;letter-spacing:0px;">销售金额</div>
<div class="t" style="left:377.8px;width:20px;text-align:center;top:682.9px;font-size:12px;line-height:20px;color:#333;letter-spacing:-0.95px;">1</div>
<div class="t" style="left:414px;top:684.2px;font-size:10.2px;line-height:20px;color:#333;letter-spacing:0px;">实木椅</div>
<div class="t" style="left:526px;top:682.9px;font-size:12px;line-height:20px;color:#333;letter-spacing:-0.95px;">XSD-1809000124</div>
<div class="t" style="left:636px;top:682.9px;font-size:12px;line-height:20px;color:#333;letter-spacing:-0.95px;">180*612*2</div>
<div class="t" style="left:713.75px;top:684.2px;font-size:10.2px;line-height:20px;color:#333;letter-spacing:0px;">顾家</div>
<div class="t" style="left:771px;top:682.9px;font-size:12px;line-height:20px;color:#333;letter-spacing:-0.95px;">1</div>
<div class="t" style="left:838.5px;top:682.9px;font-size:12px;line-height:20px;color:#333;letter-spacing:-0.95px;">-</div>
<div class="t" style="left:911px;top:682.9px;font-size:12px;line-height:20px;color:#333;letter-spacing:-0.95px;">199.00</div>
<div class="t" style="left:377.8px;width:20px;text-align:center;top:712.6px;font-size:12px;line-height:20px;color:#333;letter-spacing:-0.95px;">2</div>
<div class="t" style="left:414px;top:713.9000000000001px;font-size:10.2px;line-height:20px;color:#333;letter-spacing:0px;">餐桌</div>
<div class="t" style="left:526px;top:712.6px;font-size:12px;line-height:20px;color:#333;letter-spacing:-0.95px;">XSD-1809000124</div>
<div class="t" style="left:636px;top:712.6px;font-size:12px;line-height:20px;color:#333;letter-spacing:-0.95px;">180*612*2</div>
<div class="t" style="left:713.75px;top:713.9000000000001px;font-size:10.2px;line-height:20px;color:#333;letter-spacing:0px;">顾家</div>
<div class="t" style="left:771px;top:712.6px;font-size:12px;line-height:20px;color:#333;letter-spacing:-0.95px;">2</div>
<div class="t" style="left:838.5px;top:712.6px;font-size:12px;line-height:20px;color:#333;letter-spacing:-0.95px;">-</div>
<div class="t" style="left:911px;top:712.6px;font-size:12px;line-height:20px;color:#333;letter-spacing:-0.95px;">4990.00</div>
</body></html>
